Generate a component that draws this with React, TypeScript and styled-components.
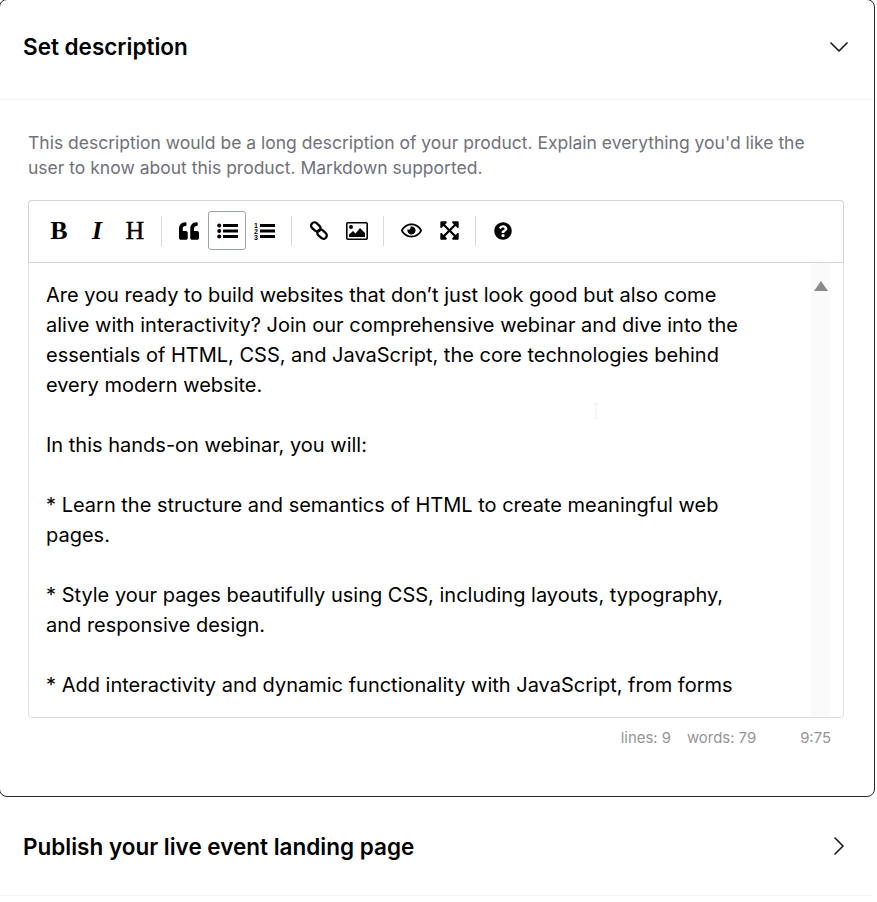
import React from 'react';
import styled, { createGlobalStyle } from 'styled-components';
import { ChevronDown, ChevronRight } from 'lucide-react';
import { FaQuoteLeft, FaRegEye, FaExpandArrowsAlt, FaQuestionCircle } from 'react-icons/fa';

const GlobalStyle = createGlobalStyle`
  html, body {
    margin: 0;
    padding: 0;
    background: #fff;
    overflow: hidden;
    font-family: Inter, "Liberation Sans", sans-serif;
  }
`;

const Page = styled.div`
  width: 877px;
  height: 902px;
  overflow: hidden;
`;

const OpenCard = styled.section`
  width: 876px;
  height: 798px;
  margin: -1px 0 0 -1px;
  box-sizing: border-box;
  border: 1px solid #27272a;
  border-radius: 8px;
  background: #fff;
`;

const OpenHeader = styled.header`
  display: flex;
  align-items: center;
  justify-content: space-between;
  box-sizing: border-box;
  height: 100px;
  padding: 0 19px 6px 23px;
  border-bottom: 1px solid #f4f4f5;
`;

const ClosedHeader = styled.header`
  display: flex;
  align-items: center;
  justify-content: space-between;
  box-sizing: border-box;
  width: 872px;
  height: 99px;
  padding: 0 17px 1px 23px;
  border-bottom: 1px solid #f4f4f5;
`;

const CardTitle = styled.h2<{ $low?: boolean }>`
  margin: ${(p) => (p.$low ? '2px 0 0' : '0')};
  font-size: 22.5px;
  font-weight: 600;
  color: #000;
`;

const CardBody = styled.div`
  padding: 30px 30px 0 28px;
`;

const Hint = styled.p`
  margin: 0 0 20px;
  font-size: 17.5px;
  line-height: 25px;
  color: #71717a;
`;

const Toolbar = styled.div`
  display: flex;
  align-items: center;
  box-sizing: border-box;
  height: 62px;
  padding: 0 11px 2px;
  border: 1px solid #ced4da;
  border-bottom: none;
  border-radius: 4px 4px 0 0;
`;

const ToolButton = styled.button<{ $active?: boolean }>`
  display: flex;
  align-items: center;
  justify-content: center;
  width: 38px;
  height: 39px;
  padding: 0;
  box-sizing: border-box;
  background: transparent;
  border: 1px solid ${(p) => (p.$active ? '#95a5a6' : 'transparent')};
  border-radius: 3px;
  color: #000;
`;

const GlyphLabel = styled.span<{ $italic?: boolean; $light?: boolean }>`
  font-family: "Liberation Serif", serif;
  font-size: 26px;
  line-height: 1;
  font-weight: ${(p) => (p.$light ? 400 : 700)};
  font-style: ${(p) => (p.$italic ? 'italic' : 'normal')};
  -webkit-text-stroke: ${(p) => (p.$light ? '0.4px #000' : '0')};
`;

const Separator = styled.i`
  display: block;
  width: 1px;
  height: 30px;
  margin: 0 8px 0 7px;
  background: #d9d9d9;
`;

const Editor = styled.div`
  position: relative;
  box-sizing: border-box;
  height: 456px;
  padding: 17px 0 0 17px;
  border: 1px solid;
  border-color: #ced4da #e4e4e7 #ddd #e4e4e7;
  border-radius: 0 0 4px 4px;
  overflow: hidden;
`;

const EditorText = styled.div`
  width: 700px;
  font-size: 20px;
  line-height: 30px;
  color: #000;
  white-space: pre-wrap;
`;

const ScrollTrack = styled.div`
  position: absolute;
  top: 0;
  bottom: 0;
  right: 13px;
  width: 19px;
  background: #fafafa;
  display: flex;
  justify-content: center;
  padding-top: 18px;
  box-sizing: border-box;
`;

const ScrollArrow = styled.div`
  width: 0;
  height: 0;
  border-left: 7px solid transparent;
  border-right: 7px solid transparent;
  border-bottom: 10px solid #8a8a8a;
`;

const TextCursor = styled.svg`
  position: absolute;
  left: 563px;
  top: 140px;
`;

const StatusBar = styled.div`
  display: flex;
  justify-content: flex-end;
  padding: 11px 13px 0 0;
  font-size: 14.9px;
  line-height: 18px;
  color: #959694;
`;

const StatusItem = styled.span<{ $gap: number }>`
  margin-left: ${(p) => p.$gap}px;
`;

const BulletIcon = () => (
  <svg width="21" height="16" viewBox="0 0 21 16" fill="#000">
    <circle cx="2.2" cy="2.4" r="2" />
    <circle cx="2.2" cy="8" r="2" />
    <circle cx="2.2" cy="13.6" r="2" />
    <rect x="6" y="1" width="15" height="3" />
    <rect x="6" y="6.5" width="15" height="3" />
    <rect x="6" y="12" width="15" height="3" />
  </svg>
);

const NumberedIcon = () => (
  <svg width="22" height="18" viewBox="0 0 22 18" fill="#000">
    <text x="0" y="5.8" fontSize="7" fontWeight="700" fontFamily="Liberation Sans">1</text>
    <text x="0" y="11.8" fontSize="7" fontWeight="700" fontFamily="Liberation Sans">2</text>
    <text x="0" y="17.8" fontSize="7" fontWeight="700" fontFamily="Liberation Sans">3</text>
    <rect x="6" y="2" width="15" height="3" />
    <rect x="6" y="7.5" width="15" height="3" />
    <rect x="6" y="13" width="15" height="3" />
  </svg>
);

const ChainIcon = () => (
  <svg width="20" height="19" viewBox="0 0 20 19" fill="none" stroke="#000" strokeWidth="2.3">
    <rect x="1.6" y="2.6" width="10.5" height="6.6" rx="3.3" transform="rotate(42 6.8 5.9)" />
    <rect x="7.8" y="9.8" width="10.5" height="6.6" rx="3.3" transform="rotate(42 13 13.1)" />
  </svg>
);

const PictureIcon = () => (
  <svg width="22" height="18" viewBox="0 0 22 18">
    <rect x="0.8" y="0.8" width="20.4" height="16.4" rx="1" fill="#fff" stroke="#000" strokeWidth="1.6" />
    <circle cx="5" cy="5" r="2" fill="#000" />
    <path d="M3 15v-2.5l4-3.5 2.5 2.5L14 6l5 5v4z" fill="#000" />
  </svg>
);

const editorCopy = `Are you ready to build websites that don’t just look good but also come alive with interactivity? Join our comprehensive webinar and dive into the essentials of HTML, CSS, and JavaScript, the core technologies behind every modern website.

In this hands-on webinar, you will:

* Learn the structure and semantics of HTML to create meaningful web pages.

* Style your pages beautifully using CSS, including layouts, typography, and responsive design.

* Add interactivity and dynamic functionality with JavaScript, from forms`;

export default function App() {
  return (
    <Page>
      <GlobalStyle />
      <OpenCard>
        <OpenHeader>
          <CardTitle>Set description</CardTitle>
          <ChevronDown size={32} strokeWidth={1.25} color="#18181b" />
        </OpenHeader>
        <CardBody>
          <Hint>
            This description would be a long description of your product. Explain everything you'd like the user to
            know about this product. Markdown supported.
          </Hint>
          <Toolbar>
            <ToolButton><GlyphLabel>B</GlyphLabel></ToolButton>
            <ToolButton><GlyphLabel $italic>I</GlyphLabel></ToolButton>
            <ToolButton><GlyphLabel $light>H</GlyphLabel></ToolButton>
            <Separator />
            <ToolButton><FaQuoteLeft size={20} /></ToolButton>
            <ToolButton $active><BulletIcon /></ToolButton>
            <ToolButton><NumberedIcon /></ToolButton>
            <Separator />
            <ToolButton><ChainIcon /></ToolButton>
            <ToolButton><PictureIcon /></ToolButton>
            <Separator />
            <ToolButton><FaRegEye size={21} /></ToolButton>
            <ToolButton><FaExpandArrowsAlt size={21} /></ToolButton>
            <Separator />
            <ToolButton><FaQuestionCircle size={18} /></ToolButton>
          </Toolbar>
          <Editor>
            <EditorText>{editorCopy}</EditorText>
            <ScrollTrack><ScrollArrow /></ScrollTrack>
            <TextCursor width="8" height="16" viewBox="0 0 8 16" fill="none" stroke="#eeeeee">
              <path d="M1 1h6M4 1v14M1 15h6" />
            </TextCursor>
          </Editor>
          <StatusBar>
            <span>lines: 9</span>
            <StatusItem $gap={16}>words: 79</StatusItem>
            <StatusItem $gap={44}>9:75</StatusItem>
          </StatusBar>
        </CardBody>
      </OpenCard>
      <ClosedHeader>
        <CardTitle $low>Publish your live event landing page</CardTitle>
        <ChevronRight size={32} strokeWidth={1.25} color="#18181b" />
      </ClosedHeader>
    </Page>
  );
}
